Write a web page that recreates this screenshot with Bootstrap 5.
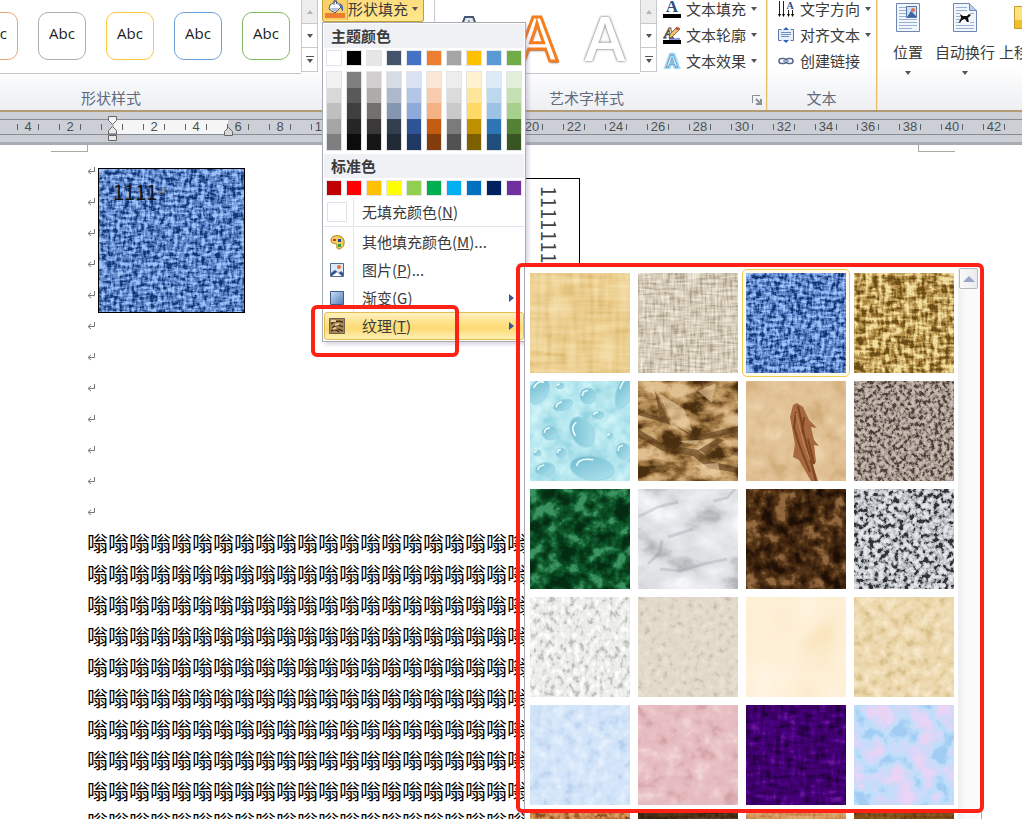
<!DOCTYPE html>
<html lang="zh-CN">
<head>
<meta charset="utf-8">
<meta name="viewport" content="width=device-width, initial-scale=1">
<title>形状填充 - 纹理</title>
<link href="https://cdn.jsdelivr.net/npm/bootstrap@5.3.0/dist/css/bootstrap.min.css" rel="stylesheet">
<script src="https://cdn.jsdelivr.net/npm/bootstrap@5.3.0/dist/js/bootstrap.bundle.min.js"></script>
<style>
body{font-family:"Noto Sans CJK SC",sans-serif;font-size:15px;line-height:20px;color:#3b3b3b;background:#fff}
button{color:inherit}
svg{display:block;flex:none}
.app{height:100vh}
.ribbon{background:linear-gradient(#fff 60%,#edeff2);border-bottom:2px solid #b39b75}
.band{height:110px}
.part{flex:none;display:flex;flex-direction:column}
.part-body{height:74px}
.part-name{color:#5f6b7d;padding-top:14px}
.name-shape{padding-left:81px}.name-art{padding-left:115px}
.sep{border-right:1px solid #e6bb62;box-shadow:1px 0 #f6e6c0}
.part-shape{width:434px}.part-art{width:333px}.part-text{width:110px}
.styles{width:301px;background:#fff;border-bottom:1px solid #c3c6cb;overflow:hidden;justify-content:flex-end;gap:20px;padding:12px 11px 0 0}
.style-box{flex:none;width:48px;height:48px;border-radius:10px;border:1px solid;background:#fff;font:15px/20px "Open Sans",sans-serif;padding:0 0 6px}
.style-box span{color:#222}
.spin{width:17px}
.spin button{height:24px;flex:none;border:1px solid #c6c9ce;border-top:0;background:#fff;padding:0;display:flex;align-items:center;justify-content:center;color:#555}
.spin button:disabled{background:#ededed;color:#b0b0b0}
.tri{width:0;height:0;border:3px solid transparent;border-top:4px solid #555;border-bottom:0;flex:none}
.tri.up{border:3px solid transparent;border-bottom:4px solid #b5b5b5;border-top:0}
.fill-wrap{margin-left:4px;height:22px}
.fill-btn{width:102px;height:22px;border:1px solid #c79b35;border-top:0;border-radius:0 0 3px 3px;background:linear-gradient(#fcdc7e,#ffe98c);padding:0 0 3px}
.fill-icon{width:25px;height:21px;border-right:1px solid #d4a640;background:#fbd069}
.art{width:206px;border-left:1px solid #c6c9ce;border-bottom:1px solid #c3c6cb;background:#fff;overflow:hidden;padding-top:1px}
.art-a{width:68px;border:0;background:none;padding:0;text-align:center;font:600 62px/64px "Open Sans",sans-serif;flex:none}
.art-blue{color:#e8e8e8;-webkit-text-stroke:2px #44587a}
.art-orange{color:#fff;-webkit-text-stroke:3px #f57e1f;text-shadow:1px 2px 2px #777}
.art-white{color:#fff;text-shadow:0 0 2px #777,0 0 3px #999}
.cmds{margin-top:-4px;padding-left:6px}
.cmd{height:26px;border:0;background:none;padding:0;display:flex;align-items:center;gap:5px;white-space:nowrap}
.cmd svg{width:18px}
.big{border:0;background:none;padding:2px 0 0;display:flex;flex-direction:column;align-items:center;white-space:nowrap;flex:none}
.big span{margin:9px 0}
.ruler{background:#ccd0d6;border-bottom:3px solid #a6acb3;padding-top:7px;height:33px;overflow:hidden}
.scale{border-top:1px solid #848b93;border-bottom:1px solid #848b93;height:16px;background:linear-gradient(90deg,#ccd0d6 114px,#f5f5f5 114px,#f5f5f5 228px,#ccd0d6 228px);padding-left:7px;font:13px/14px "Liberation Sans",sans-serif;color:#4b5056}
.unit{width:42px;flex:none}
.unit i{width:1px;height:6px;background:#5c6268;flex:none}
.unit span{width:20px;text-align:center}
.handle{left:107px;top:4px}.handle-r{left:223px;top:15px}
.sheet{flex:1;overflow:hidden;min-height:0}
.crop-l{width:37px;height:7px;margin-left:51px;border:solid #a8a8a8;border-width:0 1px 1px 0}
.crop-r{width:37px;height:7px;margin-right:67px;border:solid #a8a8a8;border-width:0 0 1px 1px}
.lines{padding:3px 0 0 87px}
.mark-row{height:31px;display:flex;align-items:center}
.body-row{height:31px;line-height:30px;font-size:21px;color:#000;white-space:nowrap;margin:0}
.shape{left:98px;top:23px;width:147px;height:145px;border:1px solid #000;overflow:hidden}
.shape .words{padding:11px 0 0 14px;font-size:20px;line-height:24px;color:#111}
.tbox{left:500px;top:33px;width:80px;height:130px;border:1px solid #000;padding:7px 18px 0 0;writing-mode:vertical-rl;font-size:20px;line-height:24px;color:#444}
.pop{left:0;top:22px;width:204px;border:1px solid #a7abb3;background:#fff;padding:1px;z-index:20;box-shadow:3px 3px 3px #5b4d8a33}
.cap{background:#f0f1f5;height:24px;line-height:24px;padding-left:7px;font-weight:700;margin:0;font-size:15px}
.swatches{display:grid;grid-template-columns:repeat(10,16px);column-gap:4px;padding:2px}
.swatches.tall{padding:3px 2px}
.sw{height:16px;border:1px solid #e2e4e7;padding:0}
.tints{border:1px solid #e2e4e7;display:flex;flex-direction:column;height:80px}
.tints button{border:0;padding:0;flex:1}
.item{width:100%;border:0;background:linear-gradient(90deg,transparent 29px,#e2e4e7 29px,#e2e4e7 30px,transparent 30px);padding:0 10px 0 5px;height:28px;display:flex;align-items:center;text-align:left}
.item .ic{width:16px;margin-right:17px;display:flex;justify-content:center}
.item.hot{border:1px solid #e3bd52;border-radius:3px;background:linear-gradient(#fff1c0,#fddf7e 45%,#fbdb75 60%,#fff0b5);padding:0 9px 0 4px}
.arrow{border:4px solid transparent;border-left:5px solid #3c5494;border-right:0;width:0;height:0;margin-left:auto}
.rule-line{height:2px;border-top:1px solid #e2e4e7}
.sub{left:201px;top:242px;width:458px;height:600px;border:1px solid #a7abb3;background:#fff;padding:7px 3px 0 5px}
.tiles{display:grid;grid-template-columns:repeat(4,100px);gap:8px;align-content:start}
.tile{width:100px;height:100px;border:0;padding:0;background:none}
.tile.on{outline:1px solid #f0cc52;outline-offset:3px;border-radius:1px;box-shadow:0 0 0 3px #fffbe8}
.track{width:21px;margin:-5px 0 0 4px;background:linear-gradient(90deg,#eee,#fafafa 40%)}
.track button{width:19px;height:21px;border:1px solid #b7bbc1;border-radius:2px;background:linear-gradient(90deg,#fafafa,#e9ebee);padding:0;margin-left:1px;display:flex;align-items:center;justify-content:center}
.track .tri.up{border:6px solid transparent;border-bottom:6px solid #97a5c8;border-top:0}
.frame{border:4px solid #fd2116;border-radius:6px;pointer-events:none;z-index:30}
.frame-a{left:-9px;top:-3px;width:468px;height:550px}
.frame-b{left:-12px;top:282px;width:148px;height:52px}
</style>
</head>
<body>
<svg width="0" height="0" class="position-absolute"><defs id="defs"></defs></svg>
<div class="app d-flex flex-column overflow-hidden">
<header class="ribbon position-relative">
 <div class="band d-flex">
  <section class="part part-shape">
   <div class="part-body d-flex">
    <div class="styles d-flex">
     <button class="style-box" style="color:#f0a27a"><span>Abc</span></button>
     <button class="style-box" style="color:#adadad"><span>Abc</span></button>
     <button class="style-box" style="color:#fac83c"><span>Abc</span></button>
     <button class="style-box" style="color:#6ea6dc"><span>Abc</span></button>
     <button class="style-box" style="color:#86bb66"><span>Abc</span></button>
    </div>
    <div class="spin d-flex flex-column">
     <button disabled aria-label="上一行"><i class="tri up"></i></button>
     <button aria-label="下一行"><i class="tri"></i></button>
     <button aria-label="其他"><svg width="8" height="8"><path d="M0 .5h8" stroke="#555"/><path d="M1 3h6L4 7z" fill="#555"/></svg></button>
    </div>
    <div class="fill-wrap position-relative">
     <button class="fill-btn d-flex align-items-center">
      <span class="fill-icon d-flex justify-content-center"><svg width="20" height="20" viewBox="0 0 20 20"><path d="M5 6l6-4 5 6-6 6-6-4z" fill="#f4f7fb" stroke="#4a5b78"/><path d="M5 9h9l-4 4z" fill="#aebdd4"/><path d="M9 6V1.500q2-2 2.500 1V5" fill="none" stroke="#4a5b78"/><path d="M14 4q5 1 4 8-2 0-2-4z" fill="#3e6cb8"/><path d="M0 14h20v5H0z" fill="#ee7d31"/></svg></span>
      <span>形状填充</span><i class="tri ms-1"></i>
     </button>
     <div class="pop position-absolute">
      <h2 class="cap">主题颜色</h2>
      <div class="swatches" id="theme"></div>
      <div class="swatches tall" id="tints"></div>
      <h2 class="cap">标准色</h2>
      <div class="swatches" id="standard"></div>
      <button class="item"><span class="ic"><svg width="20" height="20"><path d="M.5.5h19v19H.5z" fill="#fff" stroke="#dfe1e5"/></svg></span><span>无填充颜色(<u>N</u>)</span></button>
      <div class="rule-line"></div>
      <button class="item"><span class="ic"><svg width="15" height="15" viewBox="0 0 15 15"><path d="M1 5C1 1 6 0 10 1q5 2 4 8c-1 5-6 6-7 4s1-3-1-4-5 0-5-4z" fill="#f2cf55" stroke="#a98128"/><path d="M3 4h3v2H3z" fill="#c33"/><path d="M8 4h3v3H8z" fill="#2546a8"/><path d="M8 9h3v3H8z" fill="#3a9b38"/></svg></span><span>其他填充颜色(<u>M</u>)...</span></button>
      <button class="item"><span class="ic"><svg width="14" height="14" viewBox="0 0 14 14"><path d="M.5.5h13v13H.5z" fill="#dce8f8" stroke="#51698f"/><path d="M1 10l4-3 4 3 2-2 2 2v3H1z" fill="#36558e"/><path d="M2 13l5-4 5 4z" fill="#fff"/><circle cx="9" cy="4" r="2" fill="#e2703a"/></svg></span><span>图片(<u>P</u>)...</span></button>
      <button class="item"><span class="ic"><svg width="14" height="14"><defs><linearGradient id="gr" x2="1" y2="1"><stop stop-color="#cfe1f8"/><stop offset="1" stop-color="#4f7bbb"/></linearGradient></defs><path d="M.5.5h13v13H.5z" fill="url(#gr)" stroke="#3f5c8c"/></svg></span><span>渐变(<u>G</u>)</span><i class="arrow"></i></button>
      <button class="item hot"><span class="ic"><svg width="16" height="16" viewBox="0 0 16 16"><path d="M.5.5h15v15H.5z" fill="#a98655" stroke="#6a6458"/><path d="M2 6q4-4 12-2M3 10q5-5 11-1M2 13q5-3 8 1M9 11l5 2" fill="none" stroke="#4b3214" stroke-width="1.500"/><path d="M2 3h5M6 7l4-1M4 11l3-1" stroke="#e6cfa4" stroke-width="2"/></svg></span><span>纹理(<u>T</u>)</span><i class="arrow"></i></button>
      <div class="sub position-absolute d-flex">
       <div class="tiles" id="tiles"></div>
       <div class="track"><button aria-label="向上滚动"><i class="tri up"></i></button></div>
       <div class="frame frame-a position-absolute"></div>
      </div>
      <div class="frame frame-b position-absolute"></div>
     </div>
    </div>
   </div>
   <div class="part-name name-shape">形状样式</div>
  </section>

  <section class="part part-art sep">
   <div class="part-body d-flex">
    <div class="art d-flex">
     <button class="art-a art-blue">A</button><button class="art-a art-orange">A</button><button class="art-a art-white">A</button>
    </div>
    <div class="spin d-flex flex-column">
     <button disabled aria-label="上一行"><i class="tri up"></i></button>
     <button aria-label="下一行"><i class="tri"></i></button>
     <button aria-label="其他"><svg width="8" height="8"><path d="M0 .5h8" stroke="#555"/><path d="M1 3h6L4 7z" fill="#555"/></svg></button>
    </div>
    <div class="cmds">
     <button class="cmd"><svg height="20" viewBox="0 0 18 20"><text x="9" y="13" text-anchor="middle" font-family="Liberation Serif" font-weight="700" font-size="17" fill="#2c4a85">A</text><path d="M0 15h18v4H0z"/></svg>文本填充<i class="tri"></i></button>
     <button class="cmd"><svg height="20" viewBox="1 0 18 20"><text x="7" y="13" text-anchor="middle" font-family="Liberation Serif" font-style="italic" font-weight="700" font-size="15" fill="#fff" stroke="#444" stroke-width=".8">A</text><path d="M7 13l1-4 7-7 3 2-8 8z" fill="#eebd68" stroke="#70502a" stroke-width=".8"/><path d="M15 2l3 2-2 1-3-1z" fill="#c24a3c"/><path d="M7 14h11" stroke="#2332a8"/><path d="M0 15h20v4H0z"/></svg>文本轮廓<i class="tri"></i></button>
     <button class="cmd"><svg height="18" viewBox="0 0 18 18"><text x="9" y="15" text-anchor="middle" font-family="Liberation Sans" font-weight="700" font-size="17" fill="#fff" stroke="#a9d9f3" stroke-width="4" paint-order="stroke">A</text><text x="9" y="15" text-anchor="middle" font-family="Liberation Sans" font-weight="700" font-size="17" fill="#eaf7ff" stroke="#4795c4" stroke-width=".8">A</text></svg>文本效果<i class="tri"></i></button>
    </div>
   </div>
   <div class="part-name name-art d-flex justify-content-between pe-1">艺术字样式<svg class="mt-1 align-self-center" width="10" height="10"><path d="M.5 8V.5H8" fill="none" stroke="#8a8f96"/><path d="M4 4l4 4M9 4v5H4" fill="none" stroke="#8a8f96" stroke-width="2"/></svg></div>
  </section>

  <section class="part part-text sep">
   <div class="part-body ps-1">
    <div class="cmds">
     <button class="cmd"><svg height="18" viewBox="0 0 16 18"><path d="M1.500 1v15M5.500 1v15M10.500 10v6M14.500 10v6" stroke="#222"/><path d="M0 14l1.500 3L3 14zM4 14l1.500 3L7 14zM9 14l1.500 3 1.500-3zM13 14l1.500 3 1.500-3z"/><text x="12" y="9" text-anchor="middle" font-family="Liberation Serif" font-weight="700" font-size="10" fill="#2c4a85">A</text></svg>文字方向<i class="tri"></i></button>
     <button class="cmd"><svg height="16" viewBox="0 0 16 16"><path d="M.5 2.500h3M12.500 2.500h3v11h-3M3.500 13.500h-3v-11" fill="#eaf1fb" stroke="#5876a7"/><path d="M1 3h14v10H1z" fill="#e7effa"/><path d="M3 5.500h10M3 7.500h10M3 9.500h8" stroke="#6f8fc4"/><path d="M8 0l3 3H5zM8 16l3-3H5z" fill="#2b63b5"/></svg>对齐文本<i class="tri"></i></button>
     <button class="cmd"><svg height="10" viewBox="0 0 16 10"><rect x="1" y="2.500" width="7" height="5" rx="2.500" fill="none" stroke="#53698e" stroke-width="1.500"/><rect x="8" y="2.500" width="7" height="5" rx="2.500" fill="none" stroke="#53698e" stroke-width="1.500"/><path d="M5 5h6" stroke="#97a9c7" stroke-width="2"/></svg>创建链接</button>
    </div>
   </div>
   <div class="part-name text-center">文本</div>
  </section>

  <section class="part flex-fill overflow-hidden">
   <div class="d-flex ps-3">
    <button class="big me-2"><svg width="26" height="31" viewBox="0 0 26 31"><path d="M1.500 1.500h23v28h-23z" fill="#f1f5fc" stroke="#6e86b0"/><path d="M4 5.500h7M4 8.500h7M4 11.500h7M4 14.500h7M4 17.500h18M4 20.500h18M4 23.500h18M4 26.500h13" stroke="#9cb0d2"/><path d="M11.500 4.500h10v11h-10z" fill="#cfe0f6" stroke="#5573a5"/><circle cx="18" cy="8" r="2" fill="#e0704a"/><path d="M12 15l4-6 6 6z" fill="#3f639c"/></svg><span>位置</span><i class="tri"></i></button>
    <button class="big mx-1"><svg width="26" height="31" viewBox="0 0 26 31"><path d="M1.500 1.500h16l7 7v21h-23z" fill="#f1f5fc" stroke="#6e86b0"/><path d="M17.500 1.500v7h7" fill="#b8cdec" stroke="#6e86b0"/><path d="M4 5.500h11M4 8.500h11M4 11.500h18M4 14.500h4M4 17.500h4M4 20.500h18M4 23.500h18M4 26.500h18" stroke="#9cb0d2"/><path d="M8 10h10v11H8z" fill="#fff"/><path d="M8 12l3 2h4l2-2 2 1-3 3 1 4h-2l-2-3-3 1-2 3-1-1 2-4z" fill="#111"/></svg><span>自动换行</span><i class="tri"></i></button>
    <button class="big"><svg width="30" height="31"><path d="M15.500 4.500h14v22h-14z" fill="#ffe27b" stroke="#c39b2e"/><path d="M16 18h14v8H16z" fill="#f2bf2c"/></svg><span>上移</span></button>
   </div>
  </section>
 </div>
</header>

<div class="ruler position-relative">
 <div class="scale d-flex overflow-hidden" id="scale"></div>
 <svg class="position-absolute handle" width="11" height="25" viewBox="0 0 11 25"><path d="M1.500.5h8v4l-4 4-4-4z" fill="#f3f3f3" stroke="#666"/><path d="M1.500 18v-3.500l4-4 4 4V18zM1.500 19.500h8v5h-8z" fill="#e8e8e8" stroke="#666"/></svg>
 <svg class="position-absolute handle-r" width="11" height="10" viewBox="0 0 11 10"><path d="M1.500 8.500v-4l4-4 4 4v4z" fill="#d8d8d8" stroke="#666"/></svg>
</div>

<main class="sheet position-relative">
 <div class="d-flex justify-content-between"><div class="crop-l"></div><div class="crop-r"></div></div>
 <div class="lines" id="lines"></div>
 <div class="shape position-absolute">
  <svg class="position-absolute" width="145" height="143"><rect width="145" height="143" filter="url(#t-denim)"/></svg>
  <div class="words position-relative d-flex align-items-center">1111<svg width="8" height="8"><path d="M7.500 0v4.500H2M4 2L1 4.500 4 7" fill="none" stroke="#777"/></svg></div>
 </div>
 <div class="tbox position-absolute">1111111</div>
</main>
</div>

<script>
const $ = id => document.getElementById(id);

// Colour palette
const theme = ['#ffffff','#000000','#e7e6e6','#44546a','#4472c4','#ed7d31','#a5a5a5','#ffc000','#5b9bd5','#70ad47'];
const tints = [
 ['#f2f2f2','#d8d8d8','#bfbfbf','#a5a5a5','#7f7f7f'],['#7f7f7f','#595959','#3f3f3f','#262626','#0c0c0c'],
 ['#d0cece','#aeabab','#757070','#3a3838','#171616'],['#d6dce4','#adb9ca','#8496b0','#323f4f','#222a35'],
 ['#d9e2f3','#b4c6e7','#8eaadb','#2f5496','#1f3864'],['#fbe5d5','#f7cbac','#f4b183','#c55a11','#833c0b'],
 ['#ededed','#dbdbdb','#c9c9c9','#7b7b7b','#525252'],['#fff2cc','#fee599','#ffd965','#bf9000','#7f6000'],
 ['#deebf6','#bdd7ee','#9cc3e5','#2e75b5','#1e4e79'],['#e2efd9','#c5e0b3','#a8d08d','#538135','#375623']];
const standard = ['#c00000','#ff0000','#ffc000','#ffff00','#92d050','#00b050','#00b0f0','#0070c0','#002060','#7030a0'];
const sw = c => `<button class="sw" aria-label="${c}" style="background:${c}"></button>`;
$('theme').innerHTML = theme.map(sw).join('');
$('standard').innerHTML = standard.map(sw).join('');
$('tints').innerHTML = tints.map(col => `<div class="tints">${col.map(c => `<button aria-label="${c}" style="background:${c}"></button>`).join('')}</div>`).join('');

// Ruler units and document lines
$('scale').innerHTML = [4,2,''].concat(Array.from({length:21},(_, i) => i*2+2))
 .map(n => `<div class="unit d-flex justify-content-center align-items-center"><i></i><span>${n}</span><i></i></div>`).join('');
const mark = '<div class="mark-row"><svg width="8" height="8"><path d="M7.500 0v4.500H2M4 2L1 4.500 4 7" fill="none" stroke="#777"/></svg></div>';
$('lines').innerHTML = mark.repeat(12) + `<p class="body-row">${'嗡'.repeat(21)}</p>`.repeat(10);

// Textures: name, weave?, frequency, second frequency, octaves, contrast, palette from dark to light
const textures = [
 ['papyrus',1,'.02 .18','.14 .02',2,2,['#d9b66f','#e8c987','#f0d69b','#f6e0af']],
 ['canvas',1,'.06 .4','.4 .06',2,3,['#b0a590','#cfc4b0','#ddd3c1','#f0e8da']],
 ['denim',1,'.12 .33','.33 .12',3,3.6,['#123473','#4a70b4','#7199db','#a3c3fa']],
 ['mat',1,'.08 .25','.25 .08',3,4,['#6a4d18','#a8833c','#d0b06c','#f2df9f']],
 ['drops',0,'.06','',3,2,['#93d5e3','#afe3ec','#bdebf2','#d3f5f8']],
 ['bag',0,'.04 .06','',5,2.6,['#4b2f10','#8e6837','#c19a64','#e0c090']],
 ['fish',0,'.05','',4,1.6,['#d3af7c','#dfbe91','#e5c79c','#edd3ab']],
 ['sand',0,'.26','',3,3,['#4c4039','#93857b','#b5a59c','#c9bcb4']],
 ['green',0,'.07','',5,2.6,['#032c12','#08431f','#12602f','#3c9463']],
 ['marble',0,'.022 .035','',5,1.8,['#b2b4b8','#dcdde1','#e8e9ed','#f8f9fb']],
 ['brown',0,'.07','',5,2.6,['#1e0f05','#3c220e','#573718','#93683f']],
 ['granite',0,'.2','',3,3,['#303238','#a4a7ac','#cdd0d5','#e4e6ea']],
 ['news',0,'.2 .14','',3,2,['#bdbdba','#e8e8e5','#f0f0ee','#fff']],
 ['recycled',0,'.16','',3,1.4,['#c8bdab','#e0d7c8','#e5dccd','#ece5d8']],
 ['parchment',0,'.02','',2,1.6,['#fae6be','#fdeed2','#fff1d9','#fff7e8']],
 ['stationery',0,'.1','',4,1.8,['#d9c08c','#ead5a8','#f0ddb6','#f6e8ca']],
 ['bluetissue',0,'.09','',4,1.6,['#b8d0ef','#cfe2f8','#d9e9fb','#eaf3ff']],
 ['pink',0,'.07','',4,1.6,['#d4a3a8','#e5babe','#e9c2c5','#f2d4d5']],
 ['purple',1,'.06 .2','.2 .06',4,2.2,['#1c0036','#37005f','#490080','#6a1798']],
 ['bouquet',0,'.05','',5,2.4,['#a3ccf3','#bfe0fb','#d5d8fa','#e9d5f6']],
 ['cork',0,'.2','',3,2.4,['#8c4e1e','#c88146','#e0a366']],
 ['walnut',1,'.02 .3','.3 .2',2,2,['#2b190b','#4b3018','#644527']],
 ['oak',1,'.02 .3','.3 .2',2,2,['#b8743b','#d99d64','#e5b580']],
 ['wood',1,'.02 .3','.3 .2',2,2,['#4e2d0b','#7b4c18','#986427']]];
const names = ['纸莎草纸','画布','斜纹布','编织物','水滴','纸袋','鱼类化石','沙滩','绿色大理石','白色大理石','褐色大理石','花岗岩','新闻纸','再生纸','羊皮纸','信纸','蓝色面巾纸','粉色面巾纸','紫色网格','花束','软木塞','胡桃','栎木','深色木质'];
const channel = (hex, i) => {
 const h = hex.length === 4 ? hex.replace(/[^#]/g, '$&$&') : hex;
 return (parseInt(h.substr(1+i*2, 2), 16)/255).toFixed(3);
};
$('defs').innerHTML = textures.map(([id, weave, f, g, oct, k, pal], n) => {
 const row = `${k} 0 0 0 ${(1-k)/2} `, gray = row.repeat(3) + '0 0 0 0 1', flat = '1 0 0 0 0 '.repeat(3) + '0 0 0 0 1';
 const base = `<feTurbulence type="fractalNoise" baseFrequency="${f}" numOctaves="${oct}" seed="${n+3}"/>`;
 const mix = weave ? `<feColorMatrix values="${flat}" result="a"/><feTurbulence type="fractalNoise" baseFrequency="${g}" numOctaves="${oct}" seed="${n+40}"/><feColorMatrix values="${flat}" result="b"/><feComposite in="a" in2="b" operator="arithmetic" k2=".5" k3=".5"/>` : '';
 const fn = ['R','G','B'].map((c, i) => `<feFunc${c} type="table" tableValues="${pal.map(p => channel(p, i)).join(' ')}"/>`).join('');
 return `<filter id="t-${id}" x="0" y="0" width="1" height="1" color-interpolation-filters="sRGB">${base}${mix}<feColorMatrix values="${gray}"/><feComponentTransfer>${fn}</feComponentTransfer></filter>`;
}).join('') + '<linearGradient id="drop" x2="1" y2="1"><stop stop-color="#69b7cd"/><stop offset="1" stop-color="#b5e6f0"/></linearGradient>';

const drop = (x, y, rx, ry, a) => `<g transform="rotate(${a} ${x} ${y})"><ellipse cx="${x}" cy="${y}" rx="${rx}" ry="${ry}" fill="url(#drop)" stroke="#9ad5e2"/><path d="M${x-rx*.7} ${y}q0-${ry*.7} ${rx*.7}-${ry*.7}" fill="none" stroke="#f4ffff" stroke-width="1.500"/></g>`;
const extras = {
 drops: drop(52,51,11,16,-30)+drop(62,87,22,12,8)+drop(9,10,9,14,30)+drop(33,24,10,5,-20)+drop(58,15,8,8,0)+drop(95,10,8,18,20)+drop(20,52,8,7,0)+drop(15,88,10,6,-10)+drop(68,34,6,4,0)+drop(93,70,7,8,0)+drop(31,72,5,5,0)+drop(7,72,4,3,0)+drop(80,55,3,3,0)+drop(30,5,4,3,0),
 fish: '<path d="M51 22l6 4 6 13 8 8-6-1 3 13 5 6-5-1 2 17-3 3 5 16H65L53 79l-6-3 2-13-5-27 3-12z" fill="#a5683f"/><path d="M52 25l6 28 5 20 7 27M50 31l-2 15 5 17 11 28M58 36l-2 17M62 58l6 25" fill="none" stroke="#7f4420" stroke-width="2"/><path d="M50 32l8 31 6 16" fill="none" stroke="#c58a60"/>',
 bag: '<path d="M17 10L33 44 20 40 0 34V28l22 9zM33 42l24 13 43-10v6L60 60zM0 48l25 15 35 6 15 12 25 5v6l-30-5-15-12-30-5L0 56zM60 69l20-12 6 2-18 14z" fill="#553615" opacity=".6"/><path d="M20 12l14 29 20 9-8-22zM55 84l25-2 2 9-8 3zM60 10l18-8-4 20zM5 8l10-4 2 10zM40 60l18 4 4-5z" fill="#e9cda1" opacity=".6"/>',
 marble: '<path d="M0 28l20-10 20-5M10 75l12-12 2-12M22 80l20 2 24-7 23-5M75 12l14-3 8-9M30 48l25-8" fill="none" stroke="#92959a" stroke-width="3" opacity=".3"/>'
};
$('tiles').innerHTML = textures.map(([id], n) => `<button class="tile${id === 'denim' ? ' on' : ''}" aria-label="${names[n]}"><svg width="100" height="100" viewBox="0 0 100 100"><rect width="100" height="100" filter="url(#t-${id})"/>${extras[id] || ''}</svg></button>`).join('');
</script>
</body>
</html>
